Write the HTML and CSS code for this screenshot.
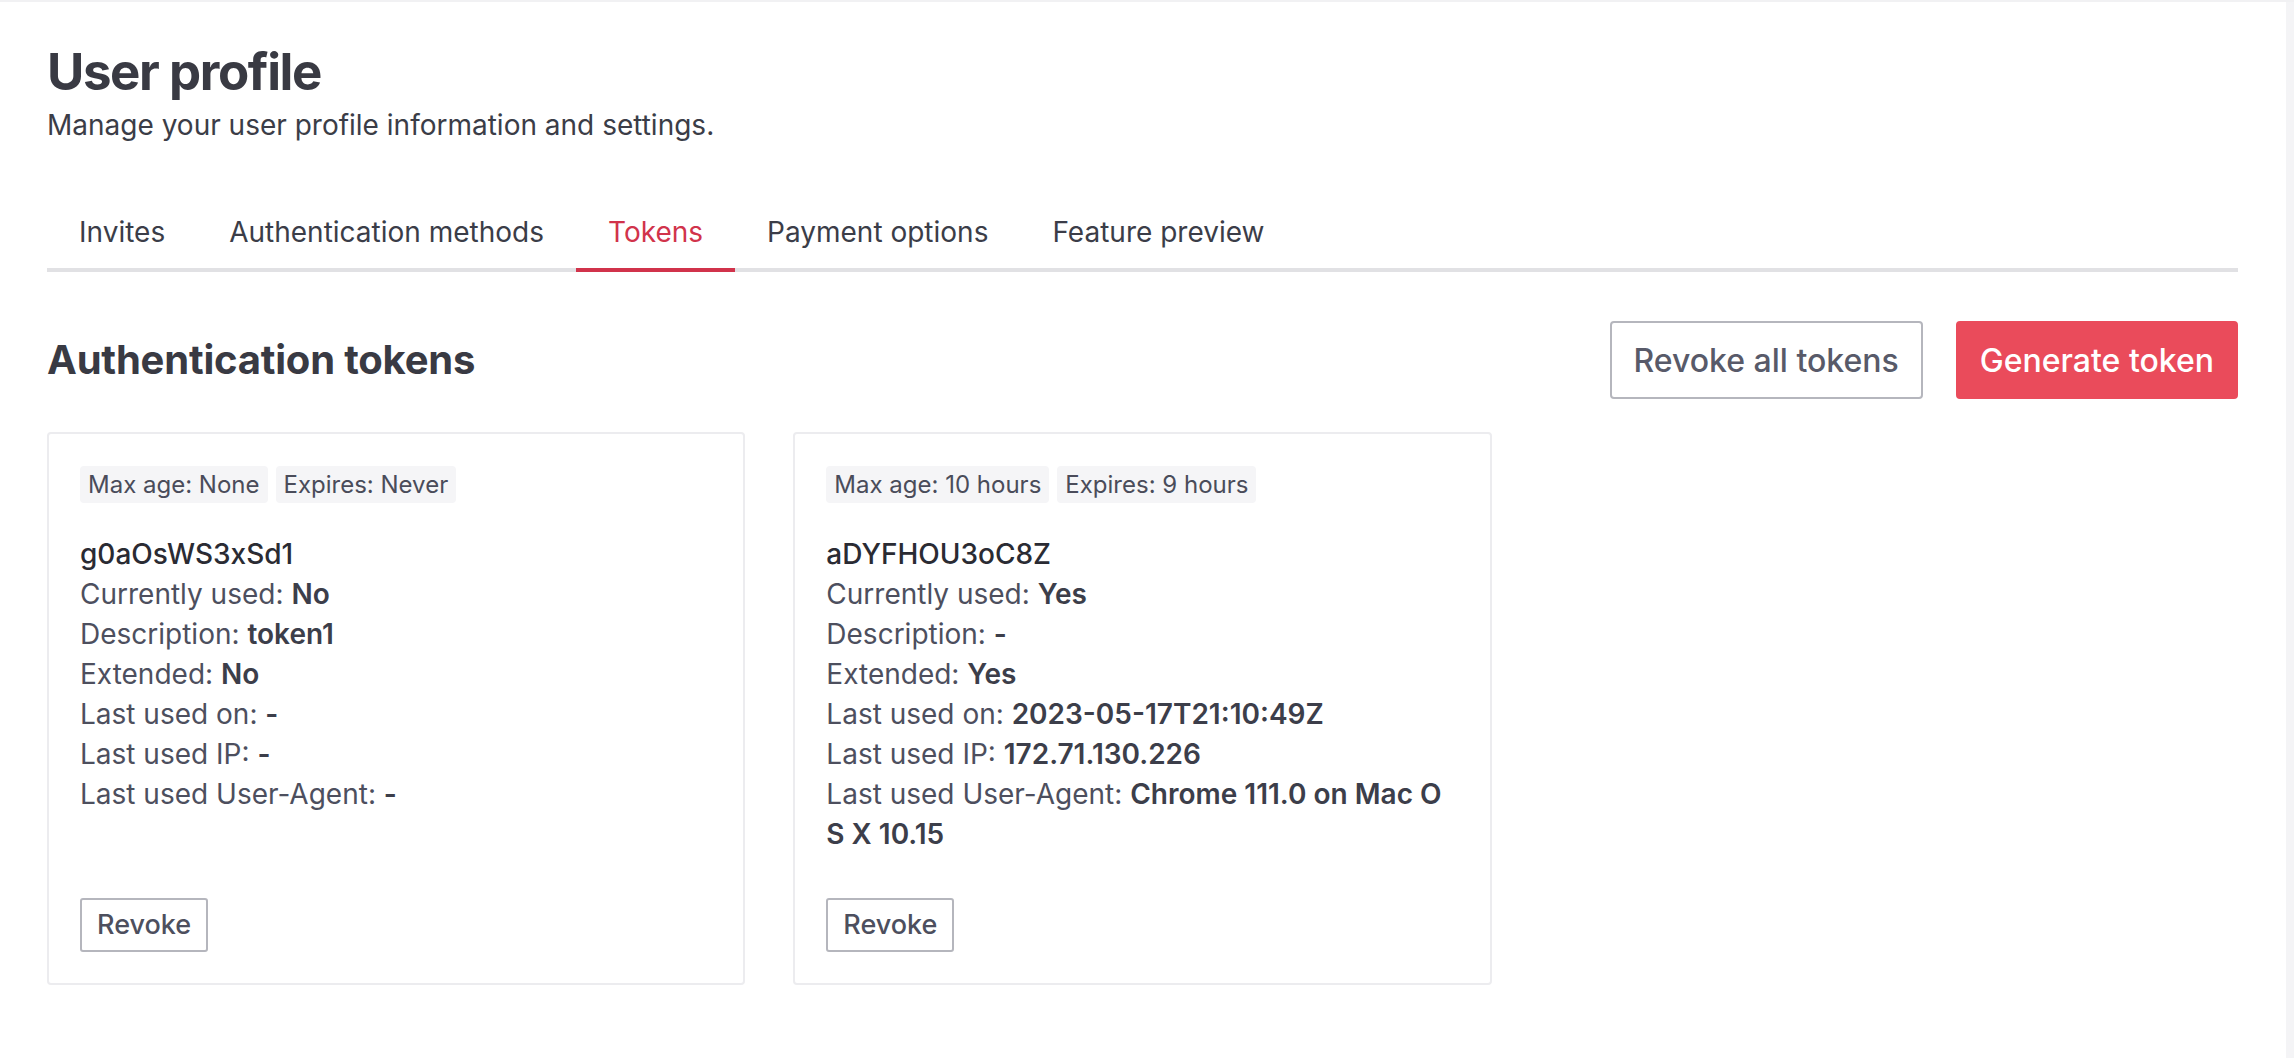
FILE: index.html
```html
<!DOCTYPE html>
<html lang="en">
<head>
<meta charset="utf-8">
<title>User profile</title>
<link rel="stylesheet" href="styles.css">
</head>
<body>
<div class="page">
  <main class="content">
    <header class="page-head">
      <h1 class="page-title">User profile</h1>
      <p class="page-subtitle">Manage your user profile information and settings.</p>
    </header>
    <nav class="tabs">
      <a class="tab">Invites</a>
      <a class="tab">Authentication methods</a>
      <a class="tab tab-active">Tokens</a>
      <a class="tab">Payment options</a>
      <a class="tab">Feature preview</a>
    </nav>
    <section class="tokens">
      <div class="section-head">
        <h2 class="section-title">Authentication tokens</h2>
        <div class="actions">
          <button class="btn btn-outline">Revoke all tokens</button>
          <button class="btn btn-primary">Generate token</button>
        </div>
      </div>
      <div class="token-grid">
        <article class="token-card">
          <div class="tags">
            <span class="tag">Max age: None</span>
            <span class="tag">Expires: Never</span>
          </div>
          <div class="info">
            <div class="token-name">g0aOsWS3xSd1</div>
            <div>Currently used: <b>No</b></div>
            <div>Description: <b>token1</b></div>
            <div>Extended: <b>No</b></div>
            <div>Last used on: <b>-</b></div>
            <div>Last used IP: <b>-</b></div>
            <div>Last used User-Agent: <b>-</b></div>
          </div>
          <button class="btn-revoke">Revoke</button>
        </article>
        <article class="token-card">
          <div class="tags">
            <span class="tag">Max age: 10 hours</span>
            <span class="tag">Expires: 9 hours</span>
          </div>
          <div class="info">
            <div class="token-name">aDYFHOU3oC8Z</div>
            <div>Currently used: <b>Yes</b></div>
            <div>Description: <b>-</b></div>
            <div>Extended: <b>Yes</b></div>
            <div>Last used on: <b>2023-05-17T21:10:49Z</b></div>
            <div>Last used IP: <b>172.71.130.226</b></div>
            <div class="wrap-any">Last used User-Agent: <b>Chrome 111.0 on Mac OS X 10.15</b></div>
          </div>
          <button class="btn-revoke">Revoke</button>
        </article>
      </div>
    </section>
  </main>
  <div class="scroll-track"></div>
</div>
</body>
</html>
```

FILE: styles.css
```css
* { box-sizing: border-box; }

html, body {
  margin: 0;
  padding: 0;
  background: #ffffff;
}

body {
  font-family: Inter, "Noto Sans", "Liberation Sans", sans-serif;
  color: #3a3b45;
}

.page {
  display: flex;
  min-height: 100vh;
  border-top: 2px solid #f1f1f3;
}

.content {
  flex: 1;
  padding: 39px 48px 0 47px;
}

.scroll-track {
  width: 8px;
  background: #f4f4f6;
}

.page-title {
  margin: 0;
  font-size: 51px;
  line-height: 62px;
  font-weight: 700;
  color: #393a43;
  letter-spacing: -1.4px;
}

.page-subtitle {
  margin: 3px 0 0;
  font-size: 28px;
  line-height: 39px;
  color: #3b3d47;
}

.tabs {
  display: flex;
  margin-top: 52px;
  border-bottom: 4px solid #e1e1e4;
}

.tab {
  padding: 16px 32px;
  margin-bottom: -4px;
  border-bottom: 4px solid transparent;
  font-size: 28px;
  line-height: 39px;
  color: #3b3d48;
  cursor: pointer;
}

.tab-active {
  color: #d1334b;
  border-bottom-color: #d1334b;
}

.section-head {
  margin-top: 49px;
  display: flex;
  justify-content: space-between;
  align-items: center;
}

.section-title {
  margin: 0;
  font-size: 40px;
  line-height: 48px;
  font-weight: 700;
  color: #393a43;
  letter-spacing: -0.2px;
}

.actions {
  display: flex;
  gap: 33px;
}

.btn {
  height: 78px;
  padding: 0 22px;
  border: 2px solid #b5b6bd;
  border-radius: 4px;
  font-family: inherit;
  font-size: 32px;
  font-weight: 500;
  background: #ffffff;
  color: #585a69;
  cursor: pointer;
}

.btn-primary {
  background: #ea4b5b;
  border-color: #ea4b5b;
  color: #ffffff;
}

.token-grid {
  margin-top: 33px;
  display: grid;
  grid-template-columns: repeat(3, 1fr);
  gap: 48px;
}

.token-card {
  display: flex;
  flex-direction: column;
  border: 2px solid #ececef;
  border-radius: 4px;
  padding: 32px 31px 31px;
}

.tags {
  display: flex;
  gap: 8px;
}

.tag {
  background: #f5f5f7;
  border-radius: 4px;
  padding: 4px 8px;
  font-size: 24px;
  line-height: 29px;
  color: #4a4c5a;
}

.info {
  margin-top: 31px;
  margin-bottom: 44px;
  font-size: 28px;
  line-height: 40px;
  color: #4d4f5e;
}

.info b {
  font-weight: 600;
  color: #3c3e4a;
}

.token-name {
  font-weight: 500;
  color: #2a2b33;
}

.wrap-any {
  word-break: break-all;
}

.btn-revoke {
  margin-top: auto;
  align-self: flex-start;
  padding: 6px 15px;
  border: 2px solid #b5b6bd;
  border-radius: 3px;
  background: #ffffff;
  font-family: inherit;
  font-size: 27px;
  line-height: 38px;
  font-weight: 500;
  color: #4d4f5e;
  cursor: pointer;
}
```
